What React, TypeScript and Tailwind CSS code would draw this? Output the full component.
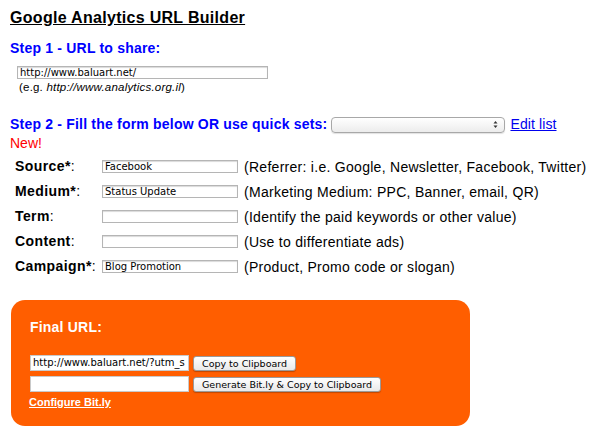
import React from "react";

const rows = [
  { label: "Source", req: true, value: "Facebook", hint: "(Referrer: i.e. Google, Newsletter, Facebook, Twitter)" },
  { label: "Medium", req: true, value: "Status Update", hint: "(Marketing Medium: PPC, Banner, email, QR)" },
  { label: "Term", req: false, value: "", hint: "(Identify the paid keywords or other value)" },
  { label: "Content", req: false, value: "", hint: "(Use to differentiate ads)" },
  { label: "Campaign", req: true, value: "Blog Promotion", hint: "(Product, Promo code or slogan)" },
];

function Field({ value, w }: { value: string; w: string }) {
  return (
    <div
      className={`${w} h-[13px] border border-[#b5b5b5] bg-white pl-[2px] text-[10px] leading-[11px] text-black overflow-hidden whitespace-nowrap shadow-[inset_0_1px_1px_rgba(0,0,0,0.15)]`}
      style={{ fontFamily: '"DejaVu Sans", sans-serif' }}
    >
      {value}
    </div>
  );
}

function Btn({ children }: { children: React.ReactNode }) {
  return (
    <div
      className="h-[15px] px-[8px] rounded-[3px] border border-[#9a9a9a] bg-gradient-to-b from-white to-[#e9e9e9] text-[9.5px] leading-[13px] text-black whitespace-nowrap shadow-[0_1px_1px_rgba(0,0,0,0.25)]"
      style={{ fontFamily: '"DejaVu Sans", sans-serif' }}
    >
      {children}
    </div>
  );
}

export default function App() {
  return (
    <div
      className="w-[600px] h-[434px] bg-white text-black pl-[10px] pt-[8px] overflow-hidden"
      style={{ fontFamily: '"Liberation Sans", Arial, sans-serif' }}
    >
      <div className="text-[16px] leading-[19px] font-bold underline tracking-[0.3px]">Google Analytics URL Builder</div>

      <div className="mt-[13px] text-[14px] leading-[17px] font-bold text-[#0000ff] tracking-[0.2px]">Step 1 - URL to share:</div>
      <div className="mt-[9px] ml-[7px]">
        <Field value="http://www.baluart.net/" w="w-[251px]" />
      </div>
      <div className="ml-[9px] mt-[1px] text-[11.5px] leading-[14px] tracking-[0.2px]">
        (e.g. <i>http://www.analytics.org.il</i>)
      </div>

      <div className="mt-[22px] flex items-center h-[17px]">
        <span className="text-[14px] leading-[17px] font-bold text-[#0000ff] tracking-[0.2px]">Step 2 - Fill the form below OR use quick sets:</span>
        <div className="ml-[4px] w-[174px] h-[16px] rounded-[4px] border border-[#a8a8a8] bg-gradient-to-b from-white to-[#ececec] flex items-center justify-end pr-[6px] shadow-[0_1px_1px_rgba(0,0,0,0.12)]">
          <svg width="5" height="9" viewBox="0 0 5 9">
            <path d="M0.5 3.5 L2.5 1 L4.5 3.5 Z" fill="#333" />
            <path d="M0.5 5.5 L2.5 8 L4.5 5.5 Z" fill="#333" />
          </svg>
        </div>
        <span className="ml-[5px] text-[14px] leading-[17px] text-[#0000ee] underline tracking-[0.1px]">Edit list</span>
      </div>
      <div className="mt-[2px] text-[14px] leading-[16px] text-[#ff0000]">New!</div>

      <div className="mt-[9px] ml-[5px] flex flex-col gap-[12px]">
        {rows.map((r) => (
          <div key={r.label} className="flex items-center h-[13px]">
            <span className="w-[87px] text-[14px] leading-[17px] tracking-[0.4px] whitespace-nowrap">
              <b>{r.label}{r.req ? "*" : ""}</b>:
            </span>
            <Field value={r.value} w="w-[136px]" />
            <span className="ml-[6px] text-[14px] leading-[16px] tracking-[0.28px] whitespace-nowrap">{r.hint}</span>
          </div>
        ))}
      </div>

      <div className="mt-[27px] ml-[1px] w-[459px] h-[126px] rounded-[14px] bg-[#ff5e00] pl-[19px] pt-[19px]">
        <div className="text-[14px] leading-[17px] font-bold text-white tracking-[0.2px]">Final URL:</div>
        <div className="mt-[19px] flex items-center gap-[4px]">
          <div
            className="w-[159px] h-[16px] border border-[#c9c9c9] bg-white pl-[2px] text-[10px] leading-[14px] overflow-hidden whitespace-nowrap"
            style={{ fontFamily: '"DejaVu Sans", sans-serif' }}
          >
            http://www.baluart.net/?utm_s
          </div>
          <Btn>Copy to Clipboard</Btn>
        </div>
        <div className="mt-[5px] flex items-center gap-[4px]">
          <div className="w-[159px] h-[16px] border border-[#c9c9c9] bg-white" />
          <Btn>Generate Bit.ly &amp; Copy to Clipboard</Btn>
        </div>
        <div className="mt-[4px] -ml-[1px] text-[11px] leading-[13px] font-bold text-white underline">Configure Bit.ly</div>
      </div>
    </div>
  );
}
